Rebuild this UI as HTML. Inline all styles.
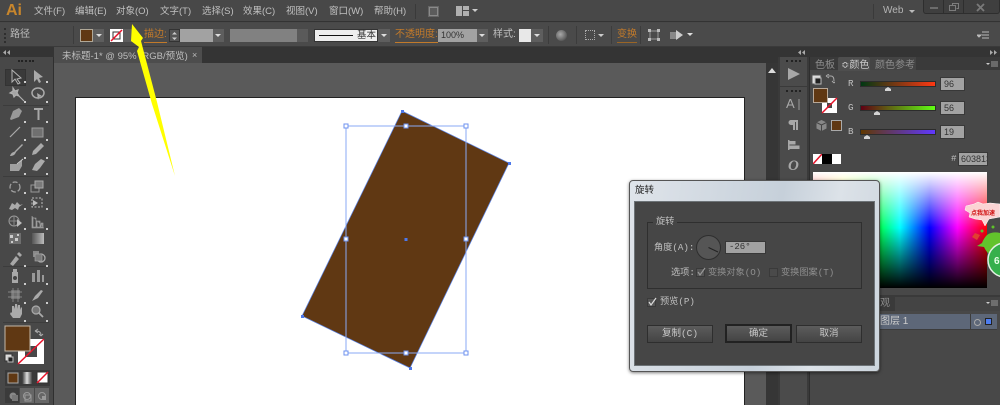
<!DOCTYPE html>
<html><head><meta charset="utf-8"><style>
html,body{margin:0;padding:0;width:1000px;height:405px;overflow:hidden;background:#484848}
body{position:relative;font-family:"Liberation Sans","Noto Sans CJK SC",sans-serif;font-size:10px;color:#c4c4c4;filter:blur(.35px)}
div,span{position:absolute;box-sizing:border-box;white-space:nowrap}
.m{top:5px;font-size:9.5px;line-height:13px;color:#c0c0c0}
.o{color:#c27a2a}
.btn{background:#5e5e5e;border:1px solid #333}
.f{background:#a2a2a2;border:1px solid #383838;color:#333;font-size:9px;line-height:12px;padding-left:3px}
.dlgb{height:18px;background:linear-gradient(#5c5c5c,#444);border:1px solid #2e2e2e;text-align:center;font-size:9.5px;line-height:16px;color:#c8c8c8}
.lab{font-family:"Liberation Mono","Noto Sans CJK SC",monospace;font-size:9.2px;color:#c0c0c0;line-height:12px}
</style></head><body>

<!-- top menu -->
<div style="left:0;top:0;width:1000px;height:22px;background:#484848;border-bottom:1px solid #333"></div>
<div style="left:6px;top:0;font:bold 16px/21px 'Liberation Sans';color:#c8862c">Ai</div>
<div class="m" style="left:34px">文件(F)</div>
<div class="m" style="left:75px">编辑(E)</div>
<div class="m" style="left:116px">对象(O)</div>
<div class="m" style="left:160px">文字(T)</div>
<div class="m" style="left:202px">选择(S)</div>
<div class="m" style="left:243px">效果(C)</div>
<div class="m" style="left:286px">视图(V)</div>
<div class="m" style="left:329px">窗口(W)</div>
<div class="m" style="left:374px">帮助(H)</div>
<div style="left:415px;top:4px;width:1px;height:15px;background:#3a3a3a"></div>
<div style="left:428px;top:6px;width:11px;height:11px;background:#8a8a8a;border:1px solid #666"><span style="left:1px;top:1px;width:7px;height:7px;background:#5c5c5c"></span></div>
<svg style="position:absolute;left:456px;top:6px" width="22" height="11"><path d="M0 0h6v10H0zM7 0h6v4H7zM7 5h6v5H7z" fill="#b0b0b0"/><path d="M16 3h6l-3 3z" fill="#ccc"/></svg>

<div style="left:873px;top:4px;width:1px;height:15px;background:#3a3a3a"></div>
<div style="left:883px;top:4px;font-size:10px;line-height:13px;color:#b4b4b4">Web</div>
<svg style="position:absolute;left:909px;top:10px" width="6" height="4"><path d="M0 0h6l-3 3z" fill="#bbb"/></svg>
<div style="left:923px;top:0;width:77px;height:14px;background:#3f3f3f;border:1px solid #2e2e2e;border-top:0;border-radius:0 0 3px 3px"></div>
<div style="left:943px;top:0;width:1px;height:14px;background:#2e2e2e"></div>
<div style="left:963px;top:0;width:1px;height:14px;background:#2e2e2e"></div>
<div style="left:930px;top:7px;width:8px;height:2px;background:#6c6c6c"></div>
<svg style="position:absolute;left:949px;top:3px" width="10" height="9"><path d="M3.500 2.500v-2h6v5h-2M.5 2.500h6v5h-6z" fill="none" stroke="#7c7c7c"/></svg>
<svg style="position:absolute;left:976px;top:3px" width="9" height="9"><path d="M1 1l7 7M8 1l-7 7" stroke="#7a7a7a" stroke-width="1.800"/></svg>

<!-- control bar -->
<div style="left:0;top:23px;width:1000px;height:24px;background:#4a4a4a;border-bottom:1px solid #3a3a3a"></div>
<div style="left:4px;top:28px;width:2px;height:15px;border-left:2px dotted #2e2e2e"></div>
<div style="left:10px;top:28px;font-size:10px;line-height:13px;color:#bcbcbc">路径</div>
<div style="left:73px;top:26px;width:1px;height:18px;background:#3c3c3c"></div>
<div style="left:80px;top:29px;width:13px;height:13px;background:#603813;border:1px solid #b0a898"></div>
<div style="left:93px;top:29px;width:11px;height:13px;background:#5e5e5e"></div>
<svg style="position:absolute;left:96px;top:34px" width="6" height="4"><path d="M0 0h6l-3 3z" fill="#ddd"/></svg>
<svg style="position:absolute;left:110px;top:29px" width="13" height="13"><rect width="13" height="13" fill="#fff"/><rect x="3" y="3" width="7" height="7" fill="none" stroke="#333"/><path d="M1 12L12 1" stroke="#e8132a" stroke-width="1.500"/></svg>
<div style="left:123px;top:29px;width:10px;height:13px;background:#5e5e5e"></div>
<div class="o" style="left:144px;top:28px;font-size:10px;line-height:14px;border-bottom:1px solid #c27a2a">描边:</div>
<div class="btn" style="left:169px;top:29px;width:11px;height:13px;background:#555"><svg style="position:absolute;left:1px;top:1px" width="7" height="10"><path d="M1 3.500h5L3.500 1zM1 6.500h5L3.500 9z" fill="#ccc"/></svg></div>
<div style="left:180px;top:29px;width:33px;height:13px;background:#a2a2a2"></div>
<div style="left:213px;top:29px;width:11px;height:13px;background:#5e5e5e"><svg style="position:absolute;left:2px;top:5px" width="6" height="4"><path d="M0 0h6l-3 3z" fill="#ddd"/></svg></div>
<div style="left:230px;top:29px;width:67px;height:13px;background:#818181"></div>
<div style="left:297px;top:29px;width:11px;height:13px;background:#5a5a5a"></div>
<div style="left:314px;top:29px;width:64px;height:13px;background:#eee;border:1px solid #333;color:#333;font-size:9.500px;line-height:11px;padding-left:42px">基本<span style="left:4px;top:5px;width:34px;height:1px;background:#111"></span></div>
<div style="left:378px;top:29px;width:12px;height:13px;background:#5e5e5e"><svg style="position:absolute;left:3px;top:5px" width="6" height="4"><path d="M0 0h6l-3 3z" fill="#ddd"/></svg></div>
<div class="o" style="left:395px;top:28px;font-size:10px;line-height:14px;border-bottom:1px solid #c27a2a">不透明度:</div>
<div class="f" style="left:438px;top:29px;width:39px;height:13px;border:0">100%</div>
<div style="left:477px;top:29px;width:11px;height:13px;background:#5e5e5e"><svg style="position:absolute;left:2px;top:5px" width="6" height="4"><path d="M0 0h6l-3 3z" fill="#ddd"/></svg></div>
<div style="left:493px;top:28px;font-size:10px;line-height:14px;color:#c0c0c0">样式:</div>
<div style="left:519px;top:29px;width:12px;height:13px;background:#e8e8e8"></div>
<div style="left:531px;top:29px;width:12px;height:13px;background:#5e5e5e"><svg style="position:absolute;left:3px;top:5px" width="6" height="4"><path d="M0 0h6l-3 3z" fill="#ddd"/></svg></div>
<div style="left:548px;top:26px;width:1px;height:18px;background:#3c3c3c"></div>
<div style="left:556px;top:30px;width:11px;height:11px;border-radius:50%;background:radial-gradient(circle at 40% 40%,#aaa,#666 60%,#333)"></div>
<div style="left:576px;top:26px;width:1px;height:18px;background:#3c3c3c"></div>
<div style="left:585px;top:30px;width:10px;height:10px;border:1px dotted #aaa"></div>
<svg style="position:absolute;left:598px;top:34px" width="6" height="4"><path d="M0 0h6l-3 3z" fill="#ccc"/></svg>
<div style="left:611px;top:26px;width:1px;height:18px;background:#3c3c3c"></div>
<div class="o" style="left:617px;top:28px;font-size:10px;line-height:14px;border-bottom:1px solid #9a6526">变换</div>
<div style="left:640px;top:26px;width:1px;height:18px;background:#3c3c3c"></div>
<svg style="position:absolute;left:648px;top:29px" width="12" height="12"><path d="M2 2h8v8H2z" fill="none" stroke="#999"/><path d="M0 0h3v3H0zM9 0h3v3H9zM0 9h3v3H0zM9 9h3v3H9z" fill="#bbb"/></svg>
<svg style="position:absolute;left:670px;top:29px" width="24" height="12"><path d="M0 3h8v7H0z" fill="#888"/><path d="M6 1l7 5-7 5z" fill="#ccc"/><path d="M17 4h6l-3 3z" fill="#ddd"/></svg>
<svg style="position:absolute;left:977px;top:31px" width="12" height="9"><path d="M0 4h4l-2 2zM5 1h7M5 4h7M5 7h7" stroke="#bbb" fill="#bbb"/></svg>

<!-- tab strip -->
<div style="left:0;top:47px;width:778px;height:16px;background:#343434"></div>
<div style="left:54px;top:47px;width:148px;height:16px;background:#4d4d4d"></div>
<div style="left:62px;top:50px;font-size:9.500px;line-height:13px;color:#bdbdbd">未标题-1* @ 95% (RGB/预览)</div>
<div style="left:192px;top:49px;font-size:9px;line-height:12px;color:#bbb">×</div>

<!-- canvas -->
<div style="left:54px;top:63px;width:712px;height:342px;background:#5a5a5a"></div>
<div style="left:75px;top:97px;width:670px;height:308px;background:#fff;border:1px solid #222;border-bottom:0"></div>
<div style="left:766px;top:63px;width:12px;height:342px;background:#363636"></div>
<svg style="position:absolute;left:768px;top:68px" width="9" height="6"><path d="M0 5h8L4 0z" fill="#ddd"/></svg>

<svg style="position:absolute;left:0;top:0" width="780" height="405">
<polygon points="402,111 509,163 410,368 302,316" fill="#603813" stroke="#5a84e8" stroke-width=".7"/>
<rect x="346" y="126" width="120" height="227" fill="none" stroke="#8aaaf6"/>
<g fill="#fff" stroke="#6d92ef"><rect x="344" y="124" width="4" height="4"/><rect x="404" y="124" width="4" height="4"/><rect x="464" y="124" width="4" height="4"/><rect x="344" y="237" width="4" height="4"/><rect x="464" y="237" width="4" height="4"/><rect x="344" y="351" width="4" height="4"/><rect x="404" y="351" width="4" height="4"/><rect x="464" y="351" width="4" height="4"/></g>
<g fill="#4d78ea"><rect x="404.500" y="238" width="3" height="3"/><rect x="401" y="110" width="3" height="3"/><rect x="508" y="162" width="3" height="3"/><rect x="409" y="367" width="3" height="3"/><rect x="301" y="315" width="3" height="3"/></g>
</svg>

<!-- left tools -->
<div style="left:0;top:47px;width:54px;height:358px;background:#484848;border-right:1px solid #2f2f2f"></div>
<div style="left:0;top:47px;width:54px;height:10px;background:#343434"></div>
<svg style="position:absolute;left:3px;top:50px" width="7" height="5"><path d="M3 0v5L0 2.500zM7 0v5L4 2.500z" fill="#aaa"/></svg>
<div style="left:18px;top:60px;width:16px;height:2px;border-top:2px dotted #222"></div>
<div style="left:5px;top:69px;width:21px;height:17px;background:#3a3a3a;border:1px solid #333"></div>
<div style="left:3px;top:105px;width:46px;height:1px;background:#3c3c3c"></div>
<div style="left:3px;top:176px;width:46px;height:1px;background:#3c3c3c"></div>
<div style="left:3px;top:266px;width:46px;height:1px;background:#3c3c3c"></div>
<div style="left:3px;top:322px;width:46px;height:1px;background:#3c3c3c"></div>
<svg style="position:absolute;left:0;top:60px" width="54" height="270" fill="#a4a4a4" stroke="none">
<path d="M12 10l0 12 3-3 3 5 2-1-3-4 4-1z" fill="none" stroke="#b4b4b4" stroke-width="1"/>
<path d="M34 10l0 12 3-3 2 4 2-1-2-4 4-1z" fill="#aaa"/>
<path d="M13 28l2 3 3-1-1 3 2 3-3-1-2 2-1-3-3-1 3-2zM19 36l5 5" stroke="#b0b0b0" stroke-width="1.200"/>
<ellipse cx="38" cy="33" rx="6" ry="5" fill="none" stroke="#aaa" stroke-width="1.500"/><path d="M37 33l5 3-3 1-1 3z" fill="#aaa"/>
<path d="M10 59l3-8 6-3 3 3-3 6-8 3z" fill="#999"/><path d="M34 48h9v2h-3.500v10h-2V50H34z" fill="#a8a8a8"/>
<path d="M10 77l10-10" stroke="#aaa" stroke-width="1.200"/><rect x="32" y="68" width="11" height="9" fill="#707070" stroke="#9c9c9c"/>
<path d="M10 96c2-5 4-3 5-5l7-7 1 1-7 7c-1 3-3 4-6 4z" fill="#aaa"/><path d="M32 95l1-4 8-8 3 3-8 8z" fill="#aaa"/>
<path d="M10 104h8l4-4v6l-3 5H10z" fill="#a0a0a0"/><path d="M17 104l6-5" stroke="#ccc"/><path d="M32 110l3-6 6-5 4 2-5 7-3 3z" fill="#aaa"/>
<circle cx="15" cy="127" r="5" fill="none" stroke="#a0a0a0" stroke-width="1.300" stroke-dasharray="5 2"/><rect x="31" y="125" width="8" height="7" fill="none" stroke="#999"/><rect x="35" y="121" width="8" height="7" fill="#7a7a7a" stroke="#aaa"/>
<path d="M9 149l3-6 3 2 2-3 3 3 3-1-4 3-1 3-3-2-3 2z" fill="#aaa"/><rect x="32" y="138" width="10" height="9" fill="none" stroke="#bbb" stroke-dasharray="2 1.500"/><path d="M33 140l5 3-5 3z" fill="#bbb"/>
<ellipse cx="14" cy="161" rx="5" ry="5" fill="none" stroke="#999"/><path d="M9 161h10M14 156v10" stroke="#888"/><path d="M17 159l5 4-5 4z" fill="#bbb"/><path d="M32 156v12h12M33 167v-9h3v9zM37 167v-6h3v6zM41 167v-4h2v4z" fill="#888" stroke="#aaa" stroke-width=".6"/>
<rect x="9" y="173" width="12" height="11" fill="#6e6e6e"/><path d="M10 175h3v3h-3zM15 178h3v3h-3zM11 181h2v2h-2zM17 174h2v2h-2z" fill="#ccc"/><rect x="32" y="173" width="12" height="11" fill="url(#gg)"/>
<path d="M10 204l6-8 3 3-6 7zM17 194l2-2 3 3-2 2z" fill="#a8a8a8"/><rect x="33" y="191" width="6" height="6" fill="#888"/><circle cx="41" cy="198" r="4" fill="none" stroke="#aaa" stroke-width="1.300"/><rect x="35" y="194" width="7" height="7" fill="#7a7a7a" stroke="#aaa" stroke-width=".6"/>
<path d="M12 212h6v11h-6zM13 209h4v3h-4z" fill="#a8a8a8"/><circle cx="15" cy="218" r="2" fill="#444"/><path d="M32 222v-9h3v9zM37 222v-12h3v12zM42 222v-7h2v7z" fill="#999"/>
<rect x="11" y="230" width="9" height="9" fill="#6e6e6e"/><path d="M8 232h14M8 237h14M13 228v14M18 228v14" stroke="#999" stroke-width=".7"/><path d="M32 241l3-5 6-6 2 1-5 7z" fill="#aaa"/>
<path d="M10 254l3 4h7l2-4v-6l-1-1-1 3v-5l-2 0v4l-1-5h-2l0 5-1-3h-2v7l-1-1z" fill="#aaa"/><circle cx="36" cy="250" r="4" fill="#777" stroke="#aaa" stroke-width="1.200"/><path d="M39 253l4 4" stroke="#aaa" stroke-width="1.800"/>
<g fill="#ccc"><path d="M24 21h2v2h-2zM46 21h2v2h-2zM24 41h2v2h-2zM46 41h2v2h-2zM24 61h2v2h-2zM46 61h2v2h-2zM24 79h2v2h-2zM46 79h2v2h-2zM24 97h2v2h-2zM46 97h2v2h-2zM24 113h2v2h-2zM46 113h2v2h-2zM24 132h2v2h-2zM46 132h2v2h-2zM24 148h2v2h-2zM46 148h2v2h-2zM24 168h2v2h-2zM46 168h2v2h-2zM24 205h2v2h-2zM46 205h2v2h-2zM24 223h2v2h-2zM46 223h2v2h-2zM24 242h2v2h-2zM46 242h2v2h-2zM24 260h2v2h-2zM46 260h2v2h-2z"/></g>
<defs><linearGradient id="gg"><stop offset="0" stop-color="#555"/><stop offset="1" stop-color="#bbb"/></linearGradient></defs>
</svg>

<!-- fill/stroke -->
<svg style="position:absolute;left:0;top:322px" width="54" height="83">
<rect x="18" y="17" width="26" height="25" fill="#fff"/><rect x="25" y="24" width="12" height="11" fill="#484848"/><path d="M18 42L44 17" stroke="#e8132a" stroke-width="1.500"/>
<rect x="5" y="4" width="25" height="25" fill="#603813" stroke="#c4b8a8"/>
<path d="M36 9c3 0 5 1 5 4M35 9l3-2M35 9l3 2M41 14l-2-2M41 14l2-2" stroke="#aaa" fill="none"/>
<rect x="5" y="32" width="7" height="7" fill="#ddd" stroke="#333"/><rect x="8" y="35" width="5" height="5" fill="#222" stroke="#bbb"/>
<rect x="5" y="48" width="45" height="16" fill="#3a3a3a"/><rect x="8" y="51" width="10" height="10" fill="#603813" stroke="#aaa"/><rect x="22" y="50" width="10" height="12" fill="url(#g2)"/><rect x="37" y="50" width="11" height="11" fill="#fff" stroke="#333"/><path d="M37 61L48 50" stroke="#e8132a" stroke-width="1.500"/>
<rect x="5" y="66" width="14" height="15" fill="#3b3b3b"/><rect x="20" y="66" width="14" height="15" fill="#666"/><rect x="35" y="66" width="14" height="15" fill="#666"/>
<circle cx="13" cy="74" r="3.500" fill="#888"/><rect x="12" y="73" width="6" height="6" fill="#777"/><circle cx="27" cy="74" r="3.500" fill="none" stroke="#999"/><rect x="25" y="73" width="6" height="6" fill="none" stroke="#999"/><circle cx="42" cy="74" r="3.500" fill="none" stroke="#999"/><rect x="42" y="74" width="4" height="4" fill="#999"/>
<defs><linearGradient id="g2"><stop offset="0" stop-color="#333"/><stop offset=".5" stop-color="#ddd"/><stop offset="1" stop-color="#444"/></linearGradient></defs>
</svg>

<!-- narrow dock -->
<div style="left:778px;top:47px;width:32px;height:358px;background:#3a3a3a"></div>
<div style="left:778px;top:47px;width:222px;height:10px;background:#343434"></div>
<svg style="position:absolute;left:798px;top:50px" width="7" height="5"><path d="M3 0v5L0 2.500zM7 0v5L4 2.500z" fill="#aaa"/></svg>
<svg style="position:absolute;left:990px;top:50px" width="7" height="5"><path d="M0 0v5l3-2.500zM4 0v5l3-2.500z" fill="#aaa"/></svg>
<div style="left:780px;top:57px;width:27px;height:29px;background:#4b4b4b"></div>
<div style="left:780px;top:87px;width:27px;height:318px;background:#4b4b4b"></div>
<div style="left:786px;top:60px;width:15px;height:2px;border-top:2px dotted #222"></div>
<div style="left:786px;top:90px;width:15px;height:2px;border-top:2px dotted #222"></div>
<svg style="position:absolute;left:780px;top:60px" width="28" height="95" fill="#a8a8a8">
<path d="M8 8l12 6-12 6z" fill="#a8a8a8"/>
<path d="M9 60h3a3.500 3.500 0 000-... " style="display:none"/>
<path d="M19 39v11" stroke="#9a9a9a"/>
<path d="M13 60h-3a3 3 0 010-... " style="display:none"/>
<path d="M15 60h3v10h-2V62h-1v8h-2v-5h-2a2.500 2.500 0 010-5z" fill="#a8a8a8"/>
<rect x="8" y="80" width="1.500" height="10"/><rect x="9.500" y="81" width="6" height="3.500"/><rect x="9.500" y="85.500" width="10" height="3.500"/>
</svg>
<div style="left:786px;top:96px;font:13px/16px 'Liberation Sans';color:#a8a8a8">A</div>
<div style="left:788px;top:158px;font:italic bold 15px/17px 'Liberation Serif';color:#a8a8a8">O</div>

<!-- color panel -->
<div style="left:810px;top:57px;width:190px;height:348px;background:#484848"></div>
<div style="left:810px;top:57px;width:190px;height:13px;background:#3a3a3a"></div>
<div style="left:809px;top:57px;width:1px;height:348px;background:#2e2e2e"></div>
<div style="left:815px;top:59px;font-size:10px;line-height:13px;color:#8e8e8e">色板</div>
<div style="left:838px;top:57px;width:32px;height:14px;background:#4e4e4e;border-radius:2px 2px 0 0"></div>
<div style="left:841px;top:59px;font-size:10px;line-height:13px;color:#c8c8c8">≎颜色</div>
<div style="left:870px;top:57px;width:46px;height:13px;background:#444"></div>
<div style="left:875px;top:59px;font-size:10px;line-height:13px;color:#8e8e8e">颜色参考</div>
<svg style="position:absolute;left:986px;top:61px" width="12" height="7"><path d="M0 2h4L2 4z" fill="#ccc"/><path d="M5 1h7M5 3h7M5 5h7" stroke="#999"/></svg>
<svg style="position:absolute;left:811px;top:74px" width="24" height="14"><rect x="1" y="1" width="9" height="9" fill="#ddd" stroke="#555"/><rect x="4" y="4" width="6" height="6" fill="#222" stroke="#bbb"/><path d="M17 2h3c2 0 3 2 3 5M15 2l3-2M15 2l3 2M23 9l-2-2M23 9l2-2" stroke="#aaa" fill="none"/></svg>
<svg style="position:absolute;left:812px;top:87px" width="28" height="30"><rect x="10" y="11" width="15" height="15" fill="#fff"/><rect x="15" y="16" width="5" height="5" fill="#484848"/><path d="M10 26l15-15" stroke="#e8132a" stroke-width="1.500"/><rect x="1.500" y="1.500" width="14" height="14" fill="#603813" stroke="#b8a898"/></svg>
<svg style="position:absolute;left:816px;top:120px" width="11" height="11"><path d="M5.500 0l5 2.500v6L5.500 11l-5-2.500v-6z" fill="#888"/><path d="M.5 2.500l5 2.500 5-2.500M5.500 5v6" stroke="#444" fill="none"/></svg>
<div style="left:831px;top:120px;width:11px;height:11px;background:#603813;border:1px solid #aaa"></div>
<div class="lab" style="left:848px;top:78px">R</div><div class="lab" style="left:848px;top:102px">G</div><div class="lab" style="left:848px;top:126px">B</div>
<div style="left:860px;top:81px;width:76px;height:6px;background:linear-gradient(90deg,#003813,#ff3813);border:1px solid #2c2c2c"></div>
<div style="left:860px;top:105px;width:76px;height:6px;background:linear-gradient(90deg,#600013,#60ff13);border:1px solid #2c2c2c"></div>
<div style="left:860px;top:129px;width:76px;height:6px;background:linear-gradient(90deg,#603800,#6038ff);border:1px solid #2c2c2c"></div>
<svg style="position:absolute;left:860px;top:85px" width="50" height="55" fill="#d4d4d4"><path d="M28 2l3 2v2h-6V4zM17 26l3 2v2h-6v-2zM7 50l3 2v2H4v-2z"/></svg>
<div class="f" style="left:940px;top:77px;width:25px;height:14px">96</div>
<div class="f" style="left:940px;top:101px;width:25px;height:14px">56</div>
<div class="f" style="left:940px;top:125px;width:25px;height:14px">19</div>
<svg style="position:absolute;left:813px;top:154px" width="28" height="10"><rect width="9" height="10" fill="#fff"/><path d="M0 10L9 0" stroke="#e8132a" stroke-width="1.500"/><rect x="9" width="10" height="10" fill="#000"/><rect x="19" width="9" height="10" fill="#fff"/></svg>
<div class="lab" style="left:951px;top:153px">#</div>
<div class="f" style="left:958px;top:152px;width:30px;height:14px;overflow:hidden;padding-left:2px">603813</div>
<div style="left:813px;top:172px;width:174px;height:116px;background:linear-gradient(180deg,#fff 0%,rgba(255,255,255,0) 48%,rgba(0,0,0,0) 48%,#000 100%),linear-gradient(90deg,#f00,#ff0 17%,#0f0 33%,#0ff 50%,#00f 67%,#f0f 83%,#f00)"></div>

<!-- layer panel -->
<div style="left:810px;top:295px;width:190px;height:16px;background:#3a3a3a"></div>
<div style="left:880px;top:297px;font-size:10px;line-height:13px;color:#8e8e8e">观</div>
<div style="left:895px;top:297px;width:105px;height:14px;background:#444"></div>
<svg style="position:absolute;left:986px;top:300px" width="12" height="7"><path d="M0 2h4L2 4z" fill="#ccc"/><path d="M5 1h7M5 3h7M5 5h7" stroke="#999"/></svg>
<div style="left:812px;top:314px;width:185px;height:16px;background:#5d6778;border-bottom:1px solid #3c3c3c"></div>
<div style="left:880px;top:315px;font-size:10px;line-height:13px;color:#cdcdcd">图层 1</div>
<div style="left:970px;top:314px;width:1px;height:16px;background:#3c3c3c"></div>
<div style="left:974px;top:319px;width:7px;height:7px;border:1px solid #aaa;border-radius:50%"></div>
<div style="left:985px;top:318px;width:7px;height:7px;background:#4d7df0;border:1px solid #222"></div>

<!-- badge -->
<svg style="position:absolute;left:960px;top:195px" width="40" height="90">
<path d="M6 11l8-2 4-2 5 2 7-1 10 1v13l-11 2-4 7-3-6-7-1-6-2 1-4-5-3z" fill="#fbd4d4" stroke="#fff" stroke-width=".5"/>
<text x="11" y="20" font-size="6" font-weight="bold" fill="#d01010" font-family="Liberation Sans,Noto Sans CJK SC,sans-serif">点我加速</text>
<path d="M15 38l5 2-3 5-5-3z" fill="#e04030"/>
<path d="M27 40c4-3 9-3 13-2v20H28c-2-2-3-4-4-6l-7-1 5-3c1-3 3-6 5-8z" fill="#62c32c"/>
<circle cx="22" cy="36" r="1.500" fill="#5fc22a"/><circle cx="33" cy="32" r="1.500" fill="#5fc22a"/>
<circle cx="45" cy="65" r="17" fill="#36b04c" stroke="#e4f0e4" stroke-width="1.500"/>
<text x="34" y="69" font-size="10" font-weight="bold" fill="#e8ffe8" font-family="Liberation Sans">60</text>
</svg>

<!-- dialog -->
<div style="left:629px;top:180px;width:251px;height:192px;background:linear-gradient(100deg,#dfe4ea,#c6d0da 55%,#dce2e8 75%,#ccd5dd);border:1px solid #555;border-radius:4px;box-shadow:0 1px 3px rgba(0,0,0,.5)"></div>
<div style="left:635px;top:184px;font-size:9.500px;line-height:13px;color:#222">旋转</div>
<div style="left:634px;top:201px;width:241px;height:165px;background:#464646;border:1px solid #6d7377"></div>
<div style="left:647px;top:222px;width:215px;height:67px;border:1px solid #2f2f2f"></div>
<div class="lab" style="left:653px;top:216px;background:#464646;padding:0 3px">旋转</div>
<div class="lab" style="left:654px;top:242px">角度(A):</div>
<div style="left:696px;top:235px;width:25px;height:25px;border-radius:50%;background:#555;border:1px solid #2e2e2e"></div>
<svg style="position:absolute;left:696px;top:235px" width="25" height="25"><path d="M12.500 12.500L22 17" stroke="#222" stroke-width="1"/></svg>
<div class="f" style="left:725px;top:241px;width:41px;height:13px;font-family:'Liberation Mono';line-height:11px">-26°</div>
<div class="lab" style="left:671px;top:267px">选项:</div>
<div style="left:696px;top:268px;width:9px;height:9px;background:#555;border:1px solid #3a3a3a"></div>
<svg style="position:absolute;left:696px;top:267px" width="11" height="10"><path d="M2 5l2 3 5-7" stroke="#999" fill="none" stroke-width="1.200"/></svg>
<div class="lab" style="left:708px;top:267px;color:#8e8e8e">变换对象(O)</div>
<div style="left:769px;top:268px;width:9px;height:9px;background:#4a4a4a;border:1px solid #3a3a3a"></div>
<div class="lab" style="left:781px;top:267px;color:#8e8e8e">变换图案(T)</div>
<div style="left:647px;top:298px;width:9px;height:9px;background:#555;border:1px solid #3a3a3a"></div>
<svg style="position:absolute;left:647px;top:297px" width="11" height="10"><path d="M2 5l2 3 5-7" stroke="#ddd" fill="none" stroke-width="1.200"/></svg>
<div class="lab" style="left:660px;top:296px">预览(P)</div>
<div class="dlgb" style="left:647px;top:325px;width:66px;font-family:'Liberation Mono','Noto Sans CJK SC',monospace">复制(C)</div>
<div class="dlgb" style="left:725px;top:324px;width:67px;height:19px;border:2px solid #222">确定</div>
<div class="dlgb" style="left:796px;top:325px;width:66px">取消</div>

<!-- yellow arrow -->
<svg style="position:absolute;left:0;top:0" width="200" height="200"><polygon points="132,24 143,38 141,41 157,102 175,176 152,104 137,51 139,47 131,41" fill="#ffff00"/></svg>

</body></html>
